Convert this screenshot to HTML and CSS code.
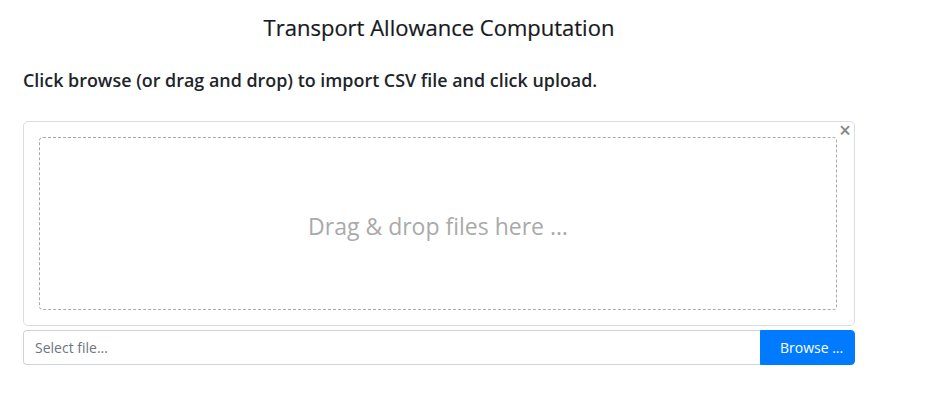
FILE: index.html
```html
<!DOCTYPE html>
<html>
<head>
<meta charset="utf-8">
<link rel="stylesheet" href="styles.css">
</head>
<body>
<div class="container">
  <h5 class="title">Transport Allowance Computation</h5>
  <p class="lead-text">Click browse (or drag and drop) to import CSV file and click upload.</p>
  <div class="file-preview">
    <button class="close" type="button">&times;</button>
    <div class="drop-zone">
      <div class="drop-title">Drag &amp; drop files here …</div>
    </div>
  </div>
  <div class="input-group">
    <div class="file-caption">Select file...</div>
    <button class="btn-browse" type="button">Browse …</button>
  </div>
</div>
</body>
</html>
```
FILE: styles.css
```css
* { box-sizing: border-box; }
body {
  margin: 0;
  font-family: "Open Sans", "Noto Sans", sans-serif;
  color: #212529;
  background: #fff;
}
.container {
  width: 832px;
  margin-left: 23px;
  display: flex;
  flex-direction: column;
}
.title {
  margin: 12px 0 0 0;
  font-size: 22px;
  font-weight: 500;
  line-height: 30px;
  text-align: center;
  color: #16191c;
  -webkit-text-stroke: 0.2px #16191c;
}
.lead-text {
  margin: 26px 0 0 0;
  font-size: 17.9px;
  font-weight: 600;
  line-height: 24px;
}
.file-preview {
  position: relative;
  margin-top: 29px;
  border: 1px solid #ddd;
  border-radius: 5px;
  padding: 15px 17px 15px 15px;
  height: 205px;
}
.close {
  position: absolute;
  top: 1px;
  right: 3px;
  border: 0;
  background: none;
  padding: 0;
  font-family: "Open Sans", sans-serif;
  font-size: 21px;
  font-weight: 600;
  line-height: 14px;
  color: #888;
}
.drop-zone {
  height: 173px;
  border: 1px dashed #aaa;
  border-radius: 4px;
  display: flex;
  align-items: center;
  justify-content: center;
  padding-top: 4px;
}
.drop-title {
  font-size: 23px;
  color: #aaa;
  font-weight: 400;
}
.input-group {
  display: flex;
  margin-top: 4px;
  height: 35px;
}
.file-caption {
  flex: 1;
  border: 1px solid #ced4da;
  border-right: 0;
  border-radius: 4px 0 0 4px;
  padding: 0 11px;
  display: flex;
  align-items: center;
  font-size: 14px;
  color: #6c757d;
}
.btn-browse {
  width: 95px;
  border: 1px solid #007bff;
  background: #007bff;
  color: #fff;
  border-radius: 0 4px 4px 0;
  font-family: "Open Sans", sans-serif;
  font-size: 14px;
  padding: 0 0 0 8px;
}
```
